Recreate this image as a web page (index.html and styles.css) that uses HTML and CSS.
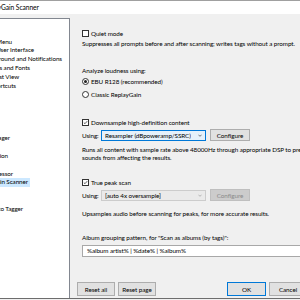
FILE: index.html
```html
<!DOCTYPE html>
<html lang="en">
<head>
    <meta charset="UTF-8">
    <title>Preferences: ReplayGain Scanner</title>
    <link rel="stylesheet" href="styles.css">
</head>
<body>
    <div class="window">
        <div class="titlebar"><span class="title">ReplayGain Scanner</span></div>

        <div class="main">
            <div class="tree">
                <div class="node off"><span class="label">Components</span></div>
                <div class="node off"><span class="label">Display</span></div>
                <div class="node e11"><span class="label">Context Menu</span></div>
                <div class="node e33"><span class="label">Default User Interface</span></div>
                <div class="node e61"><span class="label">Background and Notifications</span></div>
                <div class="node e29"><span class="label">Colors and Fonts</span></div>
                <div class="node e18"><span class="label">Playlist View</span></div>
                <div class="node e15"><span class="label">Keyboard Shortcuts</span></div>
                <div class="node off"><span class="label">Media Library</span></div>
                <div class="node off"><span class="label">Album List</span></div>
                <div class="node off"><span class="label">Networking</span></div>
                <div class="node off"><span class="label">Playback</span></div>
                <div class="node off"><span class="label">Decoding</span></div>
                <div class="node e9"><span class="label">DSP Manager</span></div>
                <div class="node off"><span class="label">Output</span></div>
                <div class="node e7"><span class="label">Shell Integration</span></div>
                <div class="node off"><span class="label">Tools</span></div>
                <div class="node e12"><span class="label">Processor</span></div>
                <div class="node e27"><span class="label selected">ReplayGain Scanner</span></div>
                <div class="node off"><span class="label">Search</span></div>
                <div class="node off"><span class="label">Tagging</span></div>
                <div class="node e22"><span class="label">Auto Tagger</span></div>
                <div class="node off"><span class="label">Advanced</span></div>
            </div>

            <div class="page">
                <div class="content">
                    <div class="check row-quiet"><span class="box"></span>Quiet mode</div>
                    <p class="note row-suppress">Suppresses all prompts before and after scanning; writes tags without a prompt.</p>

                    <p class="note row-analyze">Analyze loudness using:</p>
                    <div class="radio row-ebu"><span class="dot on"></span>EBU R128 (recommended)</div>
                    <div class="radio row-classic"><span class="dot"></span>Classic ReplayGain</div>

                    <div class="check row-downsample"><span class="box"><svg viewBox="0 0 7 7"><polyline points="1.2,3.6 2.8,5.2 5.9,1.6" /></svg></span>Downsample high-definition content</div>
                    <div class="using row-using1">
                        <span class="using-label">Using:</span>
                        <div class="combo">
                            <span class="combo-text">Resampler (dBpoweramp/SSRC)</span>
                            <svg class="arrow" viewBox="0 0 5 3"><polyline points="0.5,0.5 2.5,2.5 4.5,0.5" /></svg>
                        </div>
                        <button class="btn">Configure</button>
                    </div>
                    <p class="desc row-runs">Runs all content with sample rate above 48000Hz through appropriate DSP to prevent ultrasonic<br>sounds from affecting the results.</p>

                    <div class="check row-truepeak"><span class="box"><svg viewBox="0 0 7 7"><polyline points="1.2,3.6 2.8,5.2 5.9,1.6" /></svg></span>True peak scan</div>
                    <div class="using row-using2">
                        <span class="using-label">Using:</span>
                        <div class="combo disabled">
                            <span class="combo-text">[auto 4x oversample]</span>
                            <svg class="arrow" viewBox="0 0 5 3"><polyline points="0.5,0.5 2.5,2.5 4.5,0.5" /></svg>
                        </div>
                        <button class="btn" disabled>Configure</button>
                    </div>
                    <p class="note row-upsample">Upsamples audio before scanning for peaks, for more accurate results.</p>

                    <p class="note row-album">Album grouping pattern, for "Scan as albums (by tags)":</p>
                    <div class="pattern">%album artist% | %date% | %album%</div>
                </div>

                <div class="buttons">
                    <div class="group">
                        <button class="btn big">Reset all</button>
                        <button class="btn big">Reset page</button>
                    </div>
                    <div class="group">
                        <button class="btn big default">OK</button>
                        <button class="btn big">Cancel</button>
                        <button class="btn big">Apply</button>
                    </div>
                </div>
            </div>
        </div>
    </div>
</body>
</html>
```

FILE: styles.css
```css
* {
    margin: 0;
    padding: 0;
    box-sizing: border-box;
}

html, body {
    width: 300px;
    height: 300px;
    overflow: hidden;
    background: #f0f0f0;
}

body {
    font-family: Lato, sans-serif;
    font-size: 6.3px;
    letter-spacing: -0.08px;
    color: #000;
}

.window {
    width: 460px;
    margin-left: -100px;
    border-bottom: 1px solid #6d6d6d;
}

/* title bar */

.titlebar {
    height: 14px;
    background: #fff;
    border-top: 1px solid #a0a0a0;
    padding-left: 82px;
    line-height: 12px;
    font-size: 6.7px;
    white-space: nowrap;
}

/* tree on the left */

.main {
    display: flex;
    height: 284px;
    padding-top: 4px;
}

.tree {
    flex-shrink: 0;
    width: 160px;
    margin-left: 10px;
    background: #fff;
    border: 1px solid #828790;
    border-bottom: none;
    padding-top: 1px;
    overflow: hidden;
}

.node {
    display: flex;
    justify-content: flex-end;
    height: 8.8px;
    line-height: 8.8px;
    white-space: nowrap;
}

.label {
    padding: 0 2px;
}

.label.selected {
    background: #cce8ff;
}

.off { padding-right: 72px; }
.e7 { padding-right: 59px; }
.e9 { padding-right: 57px; }
.e11 { padding-right: 55px; }
.e12 { padding-right: 54px; }
.e15 { padding-right: 51px; }
.e18 { padding-right: 48px; }
.e22 { padding-right: 44px; }
.e27 { padding-right: 39px; }
.e29 { padding-right: 37px; }
.e33 { padding-right: 33px; }
.e61 { padding-right: 5px; }

/* settings page */

.page {
    flex: 1;
    min-width: 0;
    display: flex;
    flex-direction: column;
    justify-content: space-between;
}

.content {
    padding: 10.5px 12px 0 12px;
}

.note, .check, .radio {
    line-height: 9px;
    height: 9px;
    white-space: nowrap;
}

.check, .radio {
    display: flex;
    align-items: center;
}

.box {
    width: 7px;
    height: 7px;
    border: 1px solid #333;
    background: #fff;
    margin-right: 2px;
    display: flex;
}

.box svg {
    width: 5px;
    height: 5px;
    fill: none;
    stroke: #222;
    stroke-width: 1;
}

.dot {
    width: 7px;
    height: 7px;
    border: 1px solid #333;
    border-radius: 50%;
    background: #fff;
    margin-right: 2px;
    display: flex;
    align-items: center;
    justify-content: center;
}

.dot.on::after {
    content: "";
    width: 3px;
    height: 3px;
    border-radius: 50%;
    background: #222;
}

.using {
    display: flex;
    align-items: center;
    height: 12px;
}

.using-label {
    width: 19px;
}

.combo {
    flex-shrink: 0;
    width: 105px;
    height: 11px;
    border: 1px solid #0078d7;
    background: #e5f1fb;
    display: flex;
    align-items: center;
    justify-content: space-between;
    padding: 0 3px 0 3px;
    white-space: nowrap;
    overflow: hidden;
}

.combo-text {
    overflow: hidden;
}

.combo.disabled {
    border-color: #cccccc;
    background: #eaeaea;
}

.arrow {
    flex-shrink: 0;
    width: 4px;
    height: 3px;
    fill: none;
    stroke: #333;
    stroke-width: 0.8;
}

.combo.disabled .arrow {
    stroke: #999;
}

.btn {
    flex-shrink: 0;
    font-family: inherit;
    font-size: inherit;
    letter-spacing: inherit;
    color: #000;
    background: #e1e1e1;
    border: 1px solid #adadad;
    width: 40px;
    height: 12px;
    margin-left: 4px;
}

.btn:disabled {
    background: #cccccc;
    border-color: #bfbfbf;
    color: #8a8a8a;
}

.desc {
    line-height: 7.5px;
    white-space: nowrap;
}

.row-suppress { margin-top: 1.5px; }
.row-analyze { margin-top: 17.5px; }
.row-ebu { margin-top: 2.5px; }
.row-classic { margin-top: 3.5px; }
.row-downsample { margin-top: 19px; }
.row-using1 { margin-top: 2.5px; }
.row-runs { margin-top: 5px; }
.row-truepeak { margin-top: 16.5px; }
.row-using2 { margin-top: 2.5px; }
.row-upsample { margin-top: 7.5px; }
.row-album { margin-top: 15px; }

.pattern {
    margin-top: 3.5px;
    height: 12px;
    line-height: 10px;
    background: #fff;
    border: 1px solid #a8a8a8;
    padding-left: 4px;
    white-space: nowrap;
}

/* dialog buttons */

.buttons {
    display: flex;
    justify-content: space-between;
    padding: 0 12px 2px 7px;
}

.group {
    display: flex;
    gap: 3px;
}

.btn.big {
    width: 38px;
    height: 14px;
    margin-left: 0;
}

.btn.default {
    border-color: #0078d7;
    width: 39px;
}
```
